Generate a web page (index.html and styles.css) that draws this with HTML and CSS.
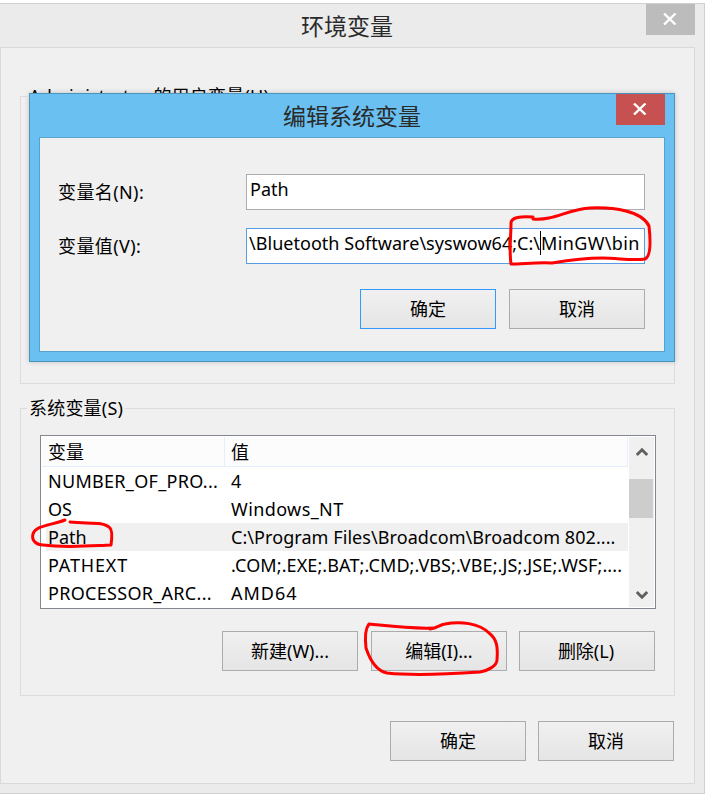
FILE: index.html
```html
<!DOCTYPE html>
<html lang="zh-CN">
<head>
<meta charset="utf-8">
<title>环境变量</title>
<link rel="stylesheet" href="styles.css">
</head>
<body>
<main class="window">
  <header class="titlebar">
    <h1 class="title">环境变量</h1>
    <div class="close"><svg width="14" height="12" viewBox="0 0 14 12"><path d="M1 0.5 12.5 11.5M12.5 .5 1 11.5"/></svg></div>
  </header>
  <div class="client">
    <section class="group user-group"><h2 class="legend"><span class="t-admin">Administrator </span>的用户变量(U)</h2></section>
    <section class="group system-group">
      <h2 class="legend">系统变量(S)</h2>
      <div class="list">
        <div class="table">
          <div class="head"><span class="name">变量</span><span class="value">值</span></div>
          <div class="row"><span class="name t-num">NUMBER_OF_PRO...</span><span class="value">4</span></div>
          <div class="row"><span class="name">OS</span><span class="value t-nt">Windows_NT</span></div>
          <div class="row selected"><span class="name">Path</span><span class="value t-prog">C:\Program Files\Broadcom\Broadcom 802....</span></div>
          <div class="row"><span class="name t-ext">PATHEXT</span><span class="value t-com">.COM;.EXE;.BAT;.CMD;.VBS;.VBE;.JS;.JSE;.WSF;....</span></div>
          <div class="row"><span class="name t-proc">PROCESSOR_ARC...</span><span class="value t-amd">AMD64</span></div>
        </div>
        <div class="scrollbar">
          <svg class="arrow" width="12" height="10" viewBox="0 0 12 10"><path d="M.8 8 6 2.7 11.2 8"/></svg>
          <div class="thumb"></div>
          <svg class="arrow down" width="12" height="10" viewBox="0 0 12 10"><path d="M.8 2 6 7.3 11.2 2"/></svg>
        </div>
      </div>
      <div class="actions">
        <button class="btn">新建(W)...</button>
        <button class="btn edit">编辑(I)...</button>
        <button class="btn remove">删除(L)</button>
      </div>
    </section>
    <div class="actions footer"><button class="btn">确定</button><button class="btn">取消</button></div>
  </div>
</main>
<div class="dialog">
  <header class="titlebar">
    <h1 class="title">编辑系统变量</h1>
    <div class="close"><svg width="14" height="12" viewBox="0 0 14 12"><path d="M1 0.5 12.5 11.5M12.5 .5 1 11.5"/></svg></div>
  </header>
  <div class="dialog-body">
    <div class="field"><span class="label">变量名(N):</span><div class="input">Path</div></div>
    <div class="field"><span class="label">变量值(V):</span><div class="input focused"><span class="t-blue">\Bluetooth Software\syswow64;C:\</span><i class="caret"></i><span class="t-bin">MinGW\bin</span></div></div>
    <div class="actions"><button class="btn default">确定</button><button class="btn">取消</button></div>
  </div>
</div>
<svg class="marks" width="705" height="797" viewBox="0 0 705 797">
  <path d="M533 217C522 216 510 217 511 224C511 235 509 250 511 264C522 264 539 262 552 263C570 260 584 258 602 258C618 258 633 261 645 259C652 256 650 235 649 226C642 211 614 207 590 208C568 209 554 221 533 219"/>
  <path d="M65 520C53 525 36 525 33 534C31 541 37 545 43 545C66 548 88 546 111 545C112 538 112 530 110 528C103 521 89 524 70 522"/>
  <path d="M434 628C410 629 389 626 369 624C365 629 365 639 366 648C370 660 377 671 387 673C414 676 451 674 480 672C487 671 497 666 497 660C498 647 497 639 489 633C479 623 460 621 445 624C439 625 438 628 430 629"/>
</svg>
</body>
</html>
```
FILE: styles.css
```css
* { box-sizing: border-box; }
body {
  margin: 0;
  width: 705px;
  height: 797px;
  padding-top: 3px;
  overflow: hidden;
  background: #fff;
  color: #000;
  font: 18px/28px "Noto Sans", "Noto Sans CJK SC", sans-serif;
  white-space: nowrap;
}
h1, h2 { margin: 0; font-weight: 400; }
.window {
  height: 791px;
  border: solid #d0d0d0;
  border-width: 1px 1px 1px 0;
  background: #ebebeb;
}
.titlebar { display: flex; position: relative; justify-content: center; height: 43px; }
.title { font-size: 23px; line-height: 44px; color: #2a2a2a; padding-right: 10px; }
.close {
  position: absolute;
  top: 0;
  right: 9px;
  display: flex;
  width: 49px;
  height: 31px;
  padding: 9px 0 0 17px;
  background: #bcbcbc;
}
.close svg { fill: none; stroke: #fff; stroke-width: 2.4; }
.client {
  width: 695px;
  height: 737px;
  padding: 48px 20px 0 19px;
  border: 1px solid #d9d9d9;
  background: #f0f0f0;
}
.group { width: 655px; height: 288px; border: 1px solid #dcdcdc; }
.legend {
  width: max-content;
  height: 28px;
  margin: -15px 0 0 6px;
  padding: 0 2px;
  background: #f0f0f0;
  font-size: 18px;
  letter-spacing: .2px;
}
.user-group { margin-bottom: 24px; }
.list {
  display: flex;
  width: 616px;
  height: 174px;
  margin: 13px 0 0 19px;
  padding: 1px;
  border: 1px solid #828790;
  background: #fff;
}
.table { width: 587px; }
.head, .row { display: flex; height: 28px; padding-left: 6px; line-height: 28px; }
.head {
  width: 586px;
  height: 30px;
  line-height: 31px;
  background: #fcfcfc;
  border: solid #e5effb;
  border-width: 0 1px 1px 0;
}
.name { width: 177px; }
.head .name { border-right: 1px solid #e5effb; }
.value { padding-left: 6px; }
.t-num, .t-proc { letter-spacing: .3px; }
.t-nt { letter-spacing: .4px; }
.t-ext { letter-spacing: .85px; }
.t-com { letter-spacing: .1px; }
.t-prog { letter-spacing: .07px; }
.t-amd { letter-spacing: 1px; }
.t-bin { letter-spacing: .35px; }
.selected { background: linear-gradient(90deg, #fff 4px, #f0f0f0 4px 586px, #fff 586px); }
.scrollbar { width: 25px; height: 170px; background: #f0f0f0; display: flex; flex-direction: column; }
.arrow { margin: 10px 0 0 7px; fill: none; stroke: #606060; stroke-width: 2.8; }
.thumb { width: 24px; height: 39px; margin-top: 22px; background: #cdcdcd; }
.down { margin: auto 0 7px 7px; }
.actions { display: flex; gap: 12px; justify-content: flex-end; }
.system-group .actions { margin: 22px 19px 0 0; }
.edit { margin-left: 1px; }
.footer { margin-top: 25px; }
.btn {
  width: 136px;
  height: 40px;
  padding: 0 0 1px;
  border: 1px solid #acacac;
  border-radius: 0;
  background: linear-gradient(#f0f0f0, #e5e5e5);
  color: #000;
  font: inherit;
}
.remove { padding-right: 2px; }
.default { border-color: #3399ff; }
.dialog {
  position: absolute;
  top: 93px;
  left: 29px;
  width: 646px;
  height: 269px;
  border: 1px solid #4b93bc;
  background: #69c0f1;
  box-shadow: 0 0 5px #0003;
}
.dialog .title { padding: 0; }
.dialog .close { background: #c75050; }
.dialog-body {
  width: 626px;
  height: 215px;
  margin-left: 9px;
  padding: 36px 19px 0 18px;
  border: 1px solid #58a2cc;
  background: #f0f0f0;
}
.field { display: flex; height: 36px; margin-bottom: 18px; }
.label { width: 188px; line-height: 37px; letter-spacing: .4px; }
.input {
  display: flex;
  width: 399px;
  height: 36px;
  padding-left: 3px;
  border: 1px solid #abadb3;
  background: #fff;
}
.focused { border-color: #569de5; padding-left: 2px; }
.t-blue { letter-spacing: .03px; }
.caret { width: 1px; height: 24px; margin: 2px 0 0; background: #000; }
.dialog .actions { margin-top: 25px; gap: 13px; }
.marks { position: absolute; top: 0; left: 0; fill: none; stroke: #f00; stroke-width: 3; stroke-linecap: round; stroke-linejoin: round; }
```
